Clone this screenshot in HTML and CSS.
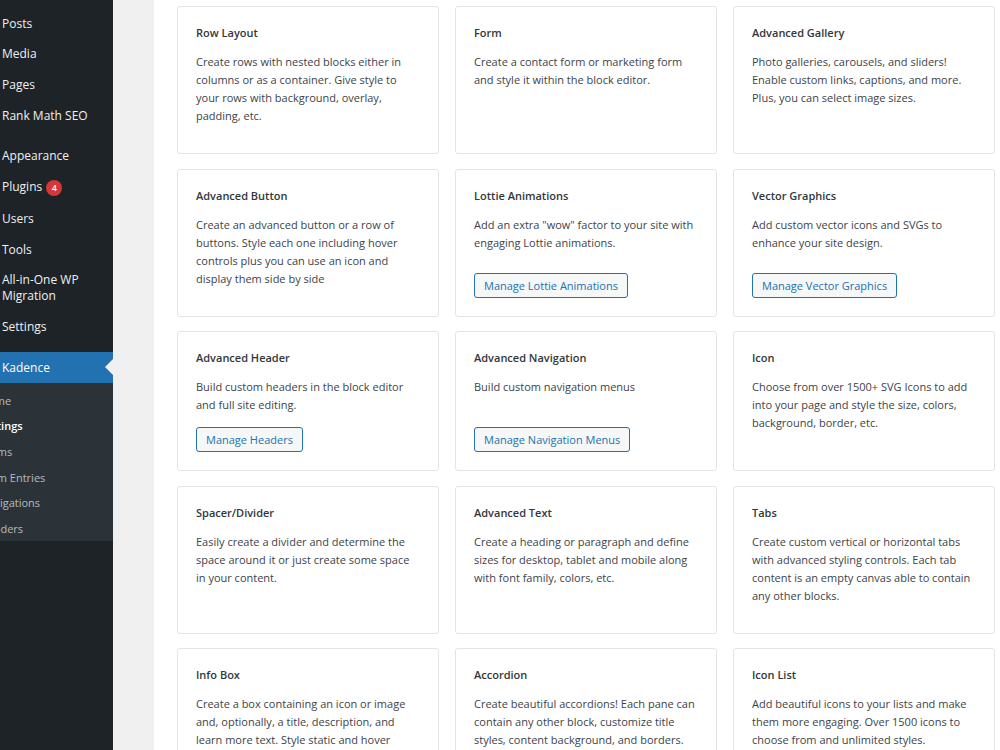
FILE: index.html
```html
<!DOCTYPE html>
<html lang="en">

<head>
    <meta charset="UTF-8">
    <title>Kadence Blocks Settings</title>
    <link rel="stylesheet" href="styles.css">
</head>

<body>
    <!-- admin sidebar -->
    <nav class="admin-menu">
        <ul class="menu-list">
            <li class="menu-item">Posts</li>
            <li class="menu-item">Media</li>
            <li class="menu-item">Pages</li>
            <li class="menu-item">Rank Math SEO</li>
            <li class="menu-separator"></li>
            <li class="menu-item">Appearance</li>
            <li class="menu-item">Plugins <span class="menu-badge">4</span></li>
            <li class="menu-item">Users</li>
            <li class="menu-item">Tools</li>
            <li class="menu-item">All-in-One WP Migration</li>
            <li class="menu-item">Settings</li>
            <li class="menu-separator"></li>
            <li class="menu-item current">Kadence</li>
            <li class="submenu">
                <ul>
                    <li>Home</li>
                    <li class="current">Settings</li>
                    <li>Forms</li>
                    <li>Form Entries</li>
                    <li>Navigations</li>
                    <li>Headers</li>
                </ul>
            </li>
        </ul>
    </nav>

    <!-- blocks panel -->
    <main class="content">
        <div class="panel">
            <div class="block-grid">
                <div class="block-card">
                    <h3>Row Layout</h3>
                    <p>Create rows with nested blocks either in columns or as a container. Give style to your rows with background, overlay, padding, etc.</p>
                </div>
                <div class="block-card">
                    <h3>Form</h3>
                    <p>Create a contact form or marketing form and style it within the block editor.</p>
                </div>
                <div class="block-card">
                    <h3>Advanced Gallery</h3>
                    <p>Photo galleries, carousels, and sliders! Enable custom links, captions, and more. Plus, you can select image sizes.</p>
                </div>

                <div class="block-card">
                    <h3>Advanced Button</h3>
                    <p>Create an advanced button or a row of buttons. Style each one including hover controls plus you can use an icon and display them side by side</p>
                </div>
                <div class="block-card">
                    <h3>Lottie Animations</h3>
                    <p>Add an extra "wow" factor to your site with engaging Lottie animations.</p>
                    <div class="card-actions"><button class="manage-btn">Manage Lottie Animations</button></div>
                </div>
                <div class="block-card">
                    <h3>Vector Graphics</h3>
                    <p>Add custom vector icons and SVGs to enhance your site design.</p>
                    <div class="card-actions"><button class="manage-btn">Manage Vector Graphics</button></div>
                </div>

                <div class="block-card">
                    <h3>Advanced Header</h3>
                    <p>Build custom headers in the block editor and full site editing.</p>
                    <div class="card-actions"><button class="manage-btn">Manage Headers</button></div>
                </div>
                <div class="block-card">
                    <h3>Advanced Navigation</h3>
                    <p>Build custom navigation menus</p>
                    <div class="card-actions"><button class="manage-btn">Manage Navigation Menus</button></div>
                </div>
                <div class="block-card">
                    <h3>Icon</h3>
                    <p>Choose from over 1500+ SVG Icons to add into your page and style the size, colors, background, border, etc.</p>
                </div>

                <div class="block-card">
                    <h3>Spacer/Divider</h3>
                    <p>Easily create a divider and determine the space around it or just create some space in your content.</p>
                </div>
                <div class="block-card">
                    <h3>Advanced Text</h3>
                    <p>Create a heading or paragraph and define sizes for desktop, tablet and mobile along with font family, colors, etc.</p>
                </div>
                <div class="block-card">
                    <h3>Tabs</h3>
                    <p>Create custom vertical or horizontal tabs with advanced styling controls. Each tab content is an empty canvas able to contain any other blocks.</p>
                </div>

                <div class="block-card">
                    <h3>Info Box</h3>
                    <p>Create a box containing an icon or image and, optionally, a title, description, and learn more text. Style static and hover separately.</p>
                </div>
                <div class="block-card">
                    <h3>Accordion</h3>
                    <p>Create beautiful accordions! Each pane can contain any other block, customize title styles, content background, and borders.</p>
                </div>
                <div class="block-card">
                    <h3>Icon List</h3>
                    <p>Add beautiful icons to your lists and make them more engaging. Over 1500 icons to choose from and unlimited styles.</p>
                </div>
            </div>
        </div>
    </main>
</body>

</html>
```

FILE: styles.css
```css
html,
body {
    margin: 0;
    height: 100%;
    overflow: hidden;
}

body {
    display: flex;
    font-family: "Open Sans", "Noto Sans", sans-serif;
    background: #f0f0f1;
}

/* sidebar */
.admin-menu {
    width: 113px;
    flex-shrink: 0;
    background: #1d2327;
    overflow: hidden;
}

.menu-list {
    list-style: none;
    margin: 0;
    padding: 8px 0 0;
}

.menu-item {
    position: relative;
    padding: 7.5px 0 7.5px 2px;
    font-size: 12px;
    line-height: 15.7px;
    color: #f0f0f1;
}

.menu-separator {
    height: 10px;
}

.menu-badge {
    display: inline-block;
    width: 16px;
    height: 16px;
    margin-left: 1px;
    border-radius: 50%;
    background: #d63638;
    color: #fff;
    font-size: 9px;
    font-weight: 600;
    line-height: 16px;
    text-align: center;
}

.menu-item.current {
    background: #2271b1;
    color: #fff;
}

.menu-item.current::after {
    content: "";
    position: absolute;
    right: 0;
    top: 50%;
    margin-top: -8px;
    border: 8px solid transparent;
    border-right-color: #f0f0f1;
    border-left-width: 0;
}

.submenu {
    background: #2c3338;
    padding: 5px 0 0;
}

.submenu ul {
    list-style: none;
    margin: 0;
    padding: 0;
}

.submenu li {
    margin-left: -20px;
    padding: 4px 0;
    font-size: 11px;
    line-height: 17.6px;
    color: rgba(240, 246, 252, 0.7);
    white-space: nowrap;
}

.submenu li.current {
    color: #fff;
    font-weight: 600;
}

/* content */
.content {
    flex: 1;
    padding-left: 41px;
}

.panel {
    height: 100%;
    background: #fff;
    padding: 6px 5px 0 23px;
}

.block-grid {
    display: grid;
    grid-template-columns: repeat(3, 262px);
    column-gap: 16px;
    row-gap: 14.5px;
}

.block-card {
    display: flex;
    flex-direction: column;
    border: 1px solid #e2e4e7;
    border-radius: 3px;
    padding: 17px 18px 18px;
}

.block-card h3 {
    margin: 0 0 11px;
    font-size: 11px;
    font-weight: 600;
    line-height: 18px;
    color: #32373c;
}

.block-card p {
    margin: 0 0 10px;
    font-size: 11px;
    line-height: 18px;
    color: #3c434a;
}

.card-actions {
    margin-top: auto;
    padding-top: 3px;
}

.manage-btn {
    height: 25px;
    padding: 0 9px;
    border: 1px solid #2271b1;
    border-radius: 3px;
    background: #f6f7f7;
    color: #2271b1;
    font-family: inherit;
    font-size: 11px;
}
```
